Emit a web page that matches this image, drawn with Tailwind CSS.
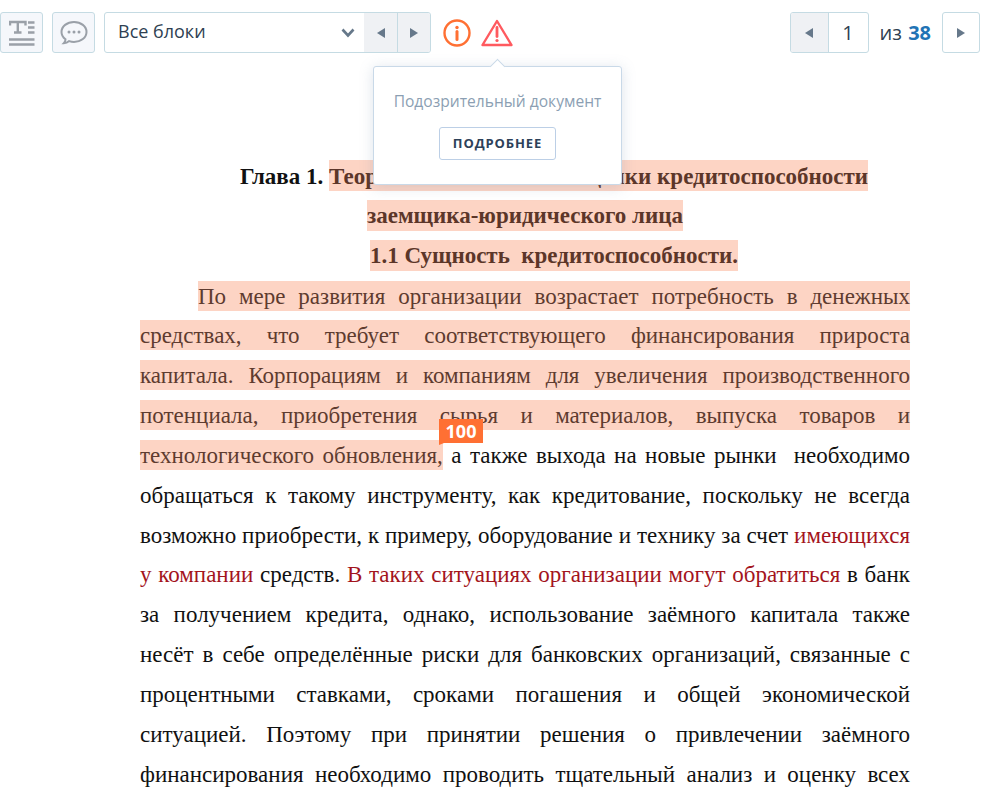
<!DOCTYPE html>
<html lang="ru">
<head>
    <meta charset="UTF-8">
    <title>Отчет</title>
    <script src="https://cdn.jsdelivr.net/npm/@tailwindcss/browser@4"></script>
</head>
<body class="relative h-[797px] overflow-hidden bg-white font-['Open_Sans',sans-serif]">

    <!-- Toolbar -->
    <div class="flex items-center h-[41px] mt-3 pr-1">
        <button class="w-[43px] h-[41px] flex items-center justify-center rounded-[3px] border border-[#c5dbe3] bg-[#f5f7fb]">
            <svg width="26" height="26" viewBox="0 0 26 26" fill="none" stroke="#9aa0a8" stroke-width="2.400">
                <path d="M1 5.500V2h15.500v3.500M8.800 2v10.500M5 12.500h7.500"/>
                <path d="M19 2.500h6.500M19 7.500h6.500M19 12.500h6.500"/>
                <path d="M0 19.500h25.500M0 24.500h25.500"/>
            </svg>
        </button>
        <button class="ml-[9px] w-[43px] h-[41px] flex items-center justify-center rounded-[3px] border border-[#c5dbe3] bg-[#f5f7fb]">
            <svg width="30" height="28" viewBox="0 0 30 28" fill="none">
                <path d="M15 3C8 3 2.500 7.300 2.500 13c0 3 1.500 5.500 4 7.300 0 1.500-.7 3-1.700 4 2.200 0 4-.9 5.400-2.200 1.500.5 3.100.8 4.800.8 7 0 12.500-4.300 12.500-9.900S22 3 15 3z" stroke="#9aa0a8" stroke-width="2"/>
                <circle cx="10" cy="13" r="1.500" fill="#9aa0a8"/><circle cx="15" cy="13" r="1.500" fill="#9aa0a8"/><circle cx="20" cy="13" r="1.500" fill="#9aa0a8"/>
            </svg>
        </button>

        <div class="ml-[9px] w-[327px] h-[41px] flex rounded-[3px] border border-[#c5dbe3] overflow-hidden">
            <div class="flex-1 flex items-center justify-between pl-[13px] pr-[9px] text-[18px] text-[#2f3f52]">
                <span class="-mt-[2px]">Все блоки</span>
                <svg width="14" height="10" viewBox="0 0 14 10" fill="none" stroke="#66788a" stroke-width="2.600"><path d="M1.500 1.500 7 7.500l5.500-6"/></svg>
            </div>
            <div class="w-[33px] flex items-center justify-center bg-[#eff1f4]">
                <svg width="8" height="10" viewBox="0 0 8 10" fill="#66788a"><path d="M8 0v10L0 5z"/></svg>
            </div>
            <div class="w-[33px] flex items-center justify-center bg-[#eff1f4] border-l border-[#c5dbe3]">
                <svg width="8" height="10" viewBox="0 0 8 10" fill="#66788a"><path d="M0 0v10l8-5z"/></svg>
            </div>
        </div>

        <svg class="ml-[11px]" width="30" height="30" viewBox="0 0 30 30" fill="none">
            <circle cx="15" cy="15" r="12.500" stroke="#ff7033" stroke-width="2.400"/>
            <circle cx="15" cy="9.500" r="1.700" fill="#ff7033"/>
            <path d="M15 13.500v8" stroke="#ff7033" stroke-width="3" stroke-linecap="round"/>
        </svg>
        <svg class="ml-[9px]" width="32" height="28" viewBox="0 0 32 28" fill="none">
            <path d="M16 2 30.500 26H1.500z" stroke="#ff5a5f" stroke-width="2.400" stroke-linejoin="round"/>
            <path d="M16 8.500v9" stroke="#ff5a5f" stroke-width="2.800" stroke-linecap="round"/>
            <circle cx="16" cy="21.500" r="1.600" fill="#ff5a5f"/>
        </svg>

        <!-- Pager -->
        <div class="ml-auto flex items-center">
            <div class="flex h-[41px] rounded-[3px] border border-[#c5dbe3] overflow-hidden">
                <div class="w-[38px] flex items-center justify-center bg-[#eff1f4] border-r border-[#c5dbe3]">
                    <svg width="8" height="10" viewBox="0 0 8 10" fill="#66788a"><path d="M8 0v10L0 5z"/></svg>
                </div>
                <div class="w-[39px] flex items-center justify-center text-[20px] text-[#2f3f52]">1</div>
            </div>
            <span class="ml-[11px] text-[20px] leading-[28px] text-[#2f3f52]">из <b class="ml-[1px] font-bold text-[#2273b5]">38</b></span>
            <div class="ml-[11px] w-[38px] h-[41px] flex items-center justify-center rounded-[3px] border border-[#c5dbe3]">
                <svg width="8" height="10" viewBox="0 0 8 10" fill="#66788a"><path d="M0 0v10l8-5z"/></svg>
            </div>
        </div>
    </div>

    <!-- Document -->
    <div class="ml-[140px] w-[770px] mt-[105px] font-['Liberation_Serif',serif] text-[23px] text-[#111]">
        <div class="font-bold leading-[38px] pl-[58px] text-center">Глава 1. <span class="bg-[#fdd4c4] text-[#5c3629] pt-[4px] pb-[2px]">Теоретические основы&nbsp; оценки кредитоспособности</span></div>
        <div class="font-bold leading-[40px] text-center"><span class="bg-[#fdd4c4] text-[#5c3629] py-[3px]">заемщика-юридического лица</span></div>
        <div class="font-bold leading-[40px] pl-[58px] text-center"><span class="bg-[#fdd4c4] text-[#5c3629] py-[3px]">1.1 Сущность&nbsp; кредитоспособности.</span></div>

        <div class="mt-[0.5px] leading-[39.85px]">
            <div class="pl-[58px] [text-align-last:justify]"><span class="bg-[#fdd4c4] text-[#5e3b2f] pt-[3px] pb-[2px]">По мере развития организации возрастает потребность в денежных</span></div>
            <div class="[text-align-last:justify]"><span class="bg-[#fdd4c4] text-[#5e3b2f] pt-[3px] pb-[2px]">средствах, что требует соответствующего финансирования прироста</span></div>
            <div class="[text-align-last:justify]"><span class="bg-[#fdd4c4] text-[#5e3b2f] pt-[3px] pb-[2px]">капитала. Корпорациям и компаниям для увеличения производственного</span></div>
            <div class="[text-align-last:justify]"><span class="bg-[#fdd4c4] text-[#5e3b2f] pt-[3px] pb-[2px]">потенциала, приобретения сырья и материалов, выпуска товаров и</span></div>
            <div class="[text-align-last:justify]"><span class="bg-[#fdd4c4] text-[#5e3b2f] pt-[3px] pb-[2px]">технологического обновления,</span> а также выхода на новые рынки&nbsp; необходимо</div>
            <div class="[text-align-last:justify]">обращаться к такому инструменту, как кредитование, поскольку не всегда</div>
            <div class="[text-align-last:justify]">возможно приобрести, к примеру, оборудование и технику за счет <span class="text-[#a3141c]">имеющихся</span></div>
            <div class="[text-align-last:justify]"><span class="text-[#a3141c]">у компании</span> средств. <span class="text-[#a3141c]">В таких ситуациях организации могут обратиться</span> в банк</div>
            <div class="[text-align-last:justify]">за получением кредита, однако, использование заёмного капитала также</div>
            <div class="[text-align-last:justify]">несёт в себе определённые риски для банковских организаций, связанные с</div>
            <div class="[text-align-last:justify]">процентными ставками, сроками погашения и общей экономической</div>
            <div class="[text-align-last:justify]">ситуацией. Поэтому при принятии решения о привлечении заёмного</div>
            <div class="[text-align-last:justify]">финансирования необходимо проводить тщательный анализ и оценку всех</div>
        </div>
    </div>

    <!-- Match badge -->
    <div class="absolute left-[439px] top-[419px] w-[44px] h-[24px] bg-[#ff7033] text-white text-[18px] font-bold leading-[24px] text-center">
        100
        <svg class="absolute left-0 top-[24px]" width="5" height="2" viewBox="0 0 5 2" fill="#ff7033"><path d="M0 0h5L0 2z"/></svg>
    </div>

    <!-- Popover -->
    <div class="absolute left-[373px] top-[66px] w-[249px] h-[119px] rounded-[3px] border border-[#c9d9e8] bg-white shadow-[0_2px_14px_rgba(120,145,175,0.25)] flex flex-col items-center">
        <div class="absolute -top-[6px] left-[118px] w-[11px] h-[11px] rotate-45 bg-white border-l border-t border-[#c9d9e8]"></div>
        <p class="mt-[24px] text-[15.6px] leading-[20px] text-[#8c9fb3]">Подозрительный документ</p>
        <button class="mt-[16px] w-[117px] h-[33px] rounded-[3px] border border-[#bccfe6] text-[13px] font-bold tracking-[0.9px] text-[#2d4159]">ПОДРОБНЕЕ</button>
    </div>
</body>
</html>
